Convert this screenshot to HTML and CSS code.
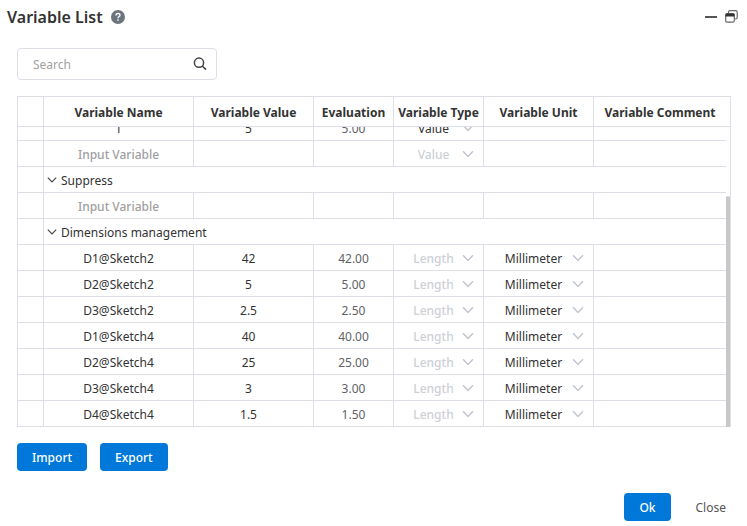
FILE: index.html
```html
<!DOCTYPE html>
<html lang="en">
<head>
<meta charset="utf-8">
<title>Variable List</title>
<link rel="stylesheet" href="styles.css">
</head>
<body>
<svg class="sprite" aria-hidden="true">
  <symbol id="chevron" viewBox="0 0 12 8"><path d="M1 1.2 6 6.4 11 1.2" fill="none" stroke="currentColor" stroke-width="1.4"/></symbol>
</svg>
<main class="dialog">
  <header class="titlebar">
    <h1>Variable List</h1>
    <button class="icon-btn help" aria-label="Help">
      <svg width="14" height="14" viewBox="0 0 14 14"><circle cx="7" cy="7" r="7" fill="#6c757d"/><path d="M5 5.4C5 4.2 5.8 3.5 7 3.5s2 .7 2 1.7C9 6.500 7 6.600 7 8.200" fill="none" stroke="#fff" stroke-width="1.3"/><rect x="6.300" y="9.300" width="1.400" height="1.500" fill="#fff"/></svg>
    </button>
    <div class="window-tools">
      <button class="icon-btn" aria-label="Minimize">
        <svg width="12" height="12" viewBox="0 0 12 12"><path d="M0 7h12" stroke="#555" stroke-width="2"/></svg>
      </button>
      <button class="icon-btn" aria-label="Restore">
        <svg width="13" height="13" viewBox="0 0 13 13"><path d="M3.500 3V2.200Q3.500.7 5 .7h5.700q1.500 0 1.500 1.500v5.300Q12.200 9 10.700 9H10" fill="none" stroke="#666" stroke-width="1.200"/><rect x=".700" y="3.700" width="8.600" height="8.500" rx="1.500" fill="#fff" stroke="#666" stroke-width="1.200"/><path d="M.500 6.600V4.800Q.500 3.500 2 3.500h6q1.500 0 1.500 1.300v1.800z" fill="#333"/></svg>
      </button>
    </div>
  </header>

  <div class="content">
    <label class="search">
      <input type="search" placeholder="Search" aria-label="Search">
      <svg width="14" height="14" viewBox="0 0 14 14"><circle cx="6" cy="5.700" r="4.600" fill="none" stroke="#444" stroke-width="1.500"/><path d="m9.300 9 3.700 3.600" stroke="#444" stroke-width="1.600"/></svg>
    </label>

    <div class="grid">
      <div class="grid-head">
        <table>
          <colgroup><col class="c-mark"><col class="c-name"><col class="c-value"><col class="c-eval"><col class="c-type"><col class="c-unit"><col></colgroup>
          <thead><tr><th></th><th>Variable Name</th><th>Variable Value</th><th>Evaluation</th><th>Variable Type</th><th>Variable Unit</th><th>Variable Comment</th></tr></thead>
        </table>
      </div>
      <div class="grid-body">
        <table>
          <colgroup><col class="c-mark"><col class="c-name"><col class="c-value"><col class="c-eval"><col class="c-type"><col class="c-unit"><col></colgroup>
          <tbody>
            <tr><td></td><td>1</td><td class="value">5</td><td class="eval">5.00</td><td><div class="pick"><select aria-label="Type"><option>Value</option></select><svg><use href="#chevron"/></svg></div></td><td></td><td></td></tr>
            <tr><td></td><td><input placeholder="Input Variable" aria-label="New variable"></td><td></td><td></td><td><div class="pick"><select aria-label="Type" disabled><option>Value</option></select><svg><use href="#chevron"/></svg></div></td><td></td><td></td></tr>
            <tr><td></td><td class="group" colspan="6"><button><svg><use href="#chevron"/></svg>Suppress</button></td></tr>
            <tr><td></td><td><input placeholder="Input Variable" aria-label="New suppress variable"></td><td></td><td></td><td></td><td></td><td></td></tr>
            <tr><td></td><td class="group" colspan="6"><button><svg><use href="#chevron"/></svg>Dimensions management</button></td></tr>
            <tr><td></td><td>D1@Sketch2</td><td class="value">42</td><td class="eval">42.00</td><td><div class="pick"><select aria-label="Type" disabled><option>Length</option></select><svg><use href="#chevron"/></svg></div></td><td><div class="pick"><select aria-label="Unit"><option>Millimeter</option></select><svg><use href="#chevron"/></svg></div></td><td></td></tr>
            <tr><td></td><td>D2@Sketch2</td><td class="value">5</td><td class="eval">5.00</td><td><div class="pick"><select aria-label="Type" disabled><option>Length</option></select><svg><use href="#chevron"/></svg></div></td><td><div class="pick"><select aria-label="Unit"><option>Millimeter</option></select><svg><use href="#chevron"/></svg></div></td><td></td></tr>
            <tr><td></td><td>D3@Sketch2</td><td class="value">2.5</td><td class="eval">2.50</td><td><div class="pick"><select aria-label="Type" disabled><option>Length</option></select><svg><use href="#chevron"/></svg></div></td><td><div class="pick"><select aria-label="Unit"><option>Millimeter</option></select><svg><use href="#chevron"/></svg></div></td><td></td></tr>
            <tr><td></td><td>D1@Sketch4</td><td class="value">40</td><td class="eval">40.00</td><td><div class="pick"><select aria-label="Type" disabled><option>Length</option></select><svg><use href="#chevron"/></svg></div></td><td><div class="pick"><select aria-label="Unit"><option>Millimeter</option></select><svg><use href="#chevron"/></svg></div></td><td></td></tr>
            <tr><td></td><td>D2@Sketch4</td><td class="value">25</td><td class="eval">25.00</td><td><div class="pick"><select aria-label="Type" disabled><option>Length</option></select><svg><use href="#chevron"/></svg></div></td><td><div class="pick"><select aria-label="Unit"><option>Millimeter</option></select><svg><use href="#chevron"/></svg></div></td><td></td></tr>
            <tr><td></td><td>D3@Sketch4</td><td class="value">3</td><td class="eval">3.00</td><td><div class="pick"><select aria-label="Type" disabled><option>Length</option></select><svg><use href="#chevron"/></svg></div></td><td><div class="pick"><select aria-label="Unit"><option>Millimeter</option></select><svg><use href="#chevron"/></svg></div></td><td></td></tr>
            <tr><td></td><td>D4@Sketch4</td><td class="value">1.5</td><td class="eval">1.50</td><td><div class="pick"><select aria-label="Type" disabled><option>Length</option></select><svg><use href="#chevron"/></svg></div></td><td><div class="pick"><select aria-label="Unit"><option>Millimeter</option></select><svg><use href="#chevron"/></svg></div></td><td></td></tr>
          </tbody>
        </table>
        <div class="thumb"></div>
      </div>
    </div>

    <div class="actions">
      <button class="btn">Import</button>
      <button class="btn">Export</button>
    </div>
  </div>

  <footer class="footer">
    <button class="btn">Ok</button>
    <button class="btn plain">Close</button>
  </footer>
</main>
</body>
</html>
```
FILE: styles.css
```css
* { box-sizing: border-box; }

body {
  margin: 0;
  background: #fff;
  color: #333;
  font: 12px/20px "Noto Sans", "Open Sans", sans-serif;
}

button, input, select {
  margin: 0;
  padding: 0;
  border: 0;
  background: none;
  color: inherit;
  font: inherit;
}

svg { display: block; flex: none; }
.sprite { position: absolute; width: 0; height: 0; }

.titlebar {
  display: flex;
  align-items: center;
  height: 34px;
  padding: 0 9px 0 7px;
}

h1 { margin: 0; font-size: 16px; font-weight: 600; }
.help { margin-left: 8px; }
.window-tools { display: flex; align-items: center; gap: 8px; margin-left: auto; padding-bottom: 2px; }

.content { padding: 14px 16px 0 17px; }

.search {
  display: flex;
  align-items: center;
  width: 200px;
  height: 32px;
  padding: 0 9px 0 15px;
  border: 1px solid #dcdfe6;
  border-radius: 4px;
}

.search input { flex: 1; min-width: 0; padding-top: 2px; outline: 0; appearance: none; }
::placeholder { color: #a0a0a0; opacity: 1; }

.grid {
  margin-top: 16px;
  border: 1px solid #dcdfe6;
  border-bottom: 0;
}

.grid-head { padding-right: 4px; border-bottom: 1px solid #dcdfe6; }

table {
  width: 100%;
  border-collapse: separate;
  border-spacing: 0;
  table-layout: fixed;
}

.c-mark { width: 26px; }
.c-name { width: 150px; }
.c-value { width: 120px; }
.c-eval { width: 80px; }
.c-type { width: 90px; }
.c-unit { width: 110px; }

th, td {
  padding: 0;
  border-right: 1px solid #dcdfe6;
  text-align: center;
  white-space: nowrap;
}

th:last-child, td:last-child { border-right: 0; }
th { height: 29px; padding-top: 2px; font-weight: 700; }
td { height: 26px; padding-top: 2px; border-bottom: 1px solid #dcdfe6; }

/* Rows are anchored to the bottom: the list is scrolled to its end. */
.grid-body {
  position: relative;
  display: flex;
  flex-direction: column;
  justify-content: flex-end;
  height: 300px;
  padding-right: 4px;
  overflow: hidden;
}

.thumb {
  position: absolute;
  right: 0;
  bottom: 0;
  width: 4px;
  height: 231px;
  border-radius: 2px 2px 0 0;
  background: #c8c8c8;
}

td.value { padding-right: 10px; }
td.eval { color: #606266; }
td input { display: block; width: 100%; text-align: center; outline: 0; }
td input::placeholder { font-weight: 500; }

.pick { position: relative; }
.pick select {
  display: block;
  width: 100%;
  padding-right: 10px;
  appearance: none;
  text-align: center;
  text-align-last: center;
}
.pick select:disabled { color: #cdd0d6; font-weight: 500; opacity: 1; }
.pick svg {
  position: absolute;
  top: 5px;
  right: 9px;
  width: 12px;
  height: 8px;
  color: #c0c4cc;
  pointer-events: none;
}

.group button { display: flex; align-items: center; gap: 4px; padding-left: 3px; }
.group svg { width: 10px; height: 8px; margin-bottom: 2px; color: #444; }

.actions { display: flex; gap: 13px; margin-top: 16px; }

.btn {
  height: 28px;
  padding: 2px 15px 0;
  border-radius: 4px;
  background: #0078d9;
  color: #fff;
  font-weight: 500;
}

.btn.plain { background: none; color: #555; font-weight: 400; }

.footer {
  display: flex;
  justify-content: flex-end;
  gap: 10px;
  margin-top: 22px;
  padding: 0 6px 5px 0;
}
```
